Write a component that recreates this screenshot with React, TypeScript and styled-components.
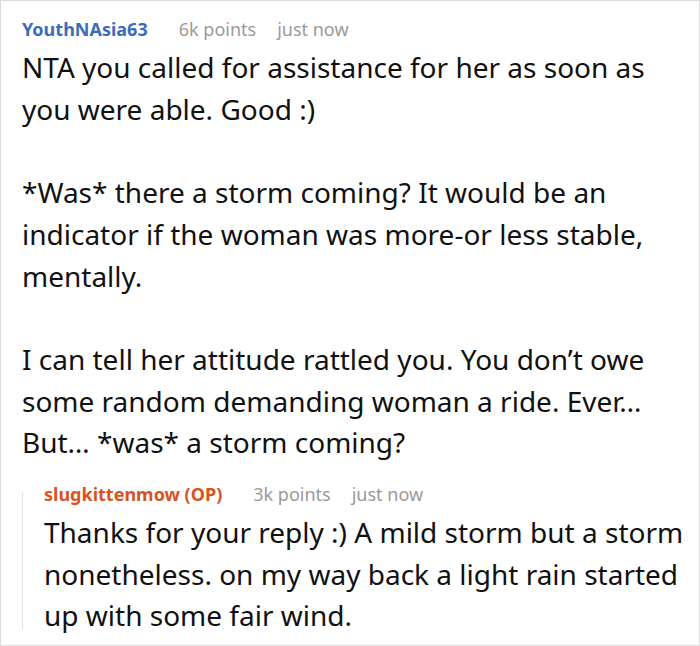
import styled, { createGlobalStyle } from 'styled-components';

const GlobalStyle = createGlobalStyle`
  html, body {
    margin: 0;
    padding: 0;
    background: #fff;
  }
  body {
    font-family: 'Noto Sans', 'Open Sans', sans-serif;
    color: #111;
  }
`;

interface Comment {
  author: string;
  isOp?: boolean;
  points: string;
  time: string;
  paragraphs: string[];
}

const mainComment: Comment = {
  author: 'YouthNAsia63',
  points: '6k points',
  time: 'just now',
  paragraphs: [
    'NTA you called for assistance for her as soon as you were able. Good :)',
    '*Was* there a storm coming? It would be an indicator if the woman was more-or less stable, mentally.',
    'I can tell her attitude rattled you. You don\u2019t owe some random demanding woman a ride. Ever\u2026 But\u2026 *was* a storm coming?',
  ],
};

const reply: Comment = {
  author: 'slugkittenmow (OP)',
  isOp: true,
  points: '3k points',
  time: 'just now',
  paragraphs: [
    'Thanks for your reply :) A mild storm but a storm nonetheless. on my way back a light rain started up with some fair wind.',
  ],
};

const CommentHeader = ({ comment }: { comment: Comment }) => (
  <Header>
    <Author isOp={comment.isOp}>{comment.author}</Author>
    <Meta>{comment.points}</Meta>
    <Meta>{comment.time}</Meta>
  </Header>
);

export default function App() {
  return (
    <>
      <GlobalStyle />
      <Thread>
        <CommentHeader comment={mainComment} />
        <Body>
          {mainComment.paragraphs.map(text => (
            <Paragraph key={text}>{text}</Paragraph>
          ))}
        </Body>
        <Reply>
          <CommentHeader comment={reply} />
          <Body>
            {reply.paragraphs.map(text => (
              <Paragraph key={text}>{text}</Paragraph>
            ))}
          </Body>
        </Reply>
      </Thread>
    </>
  );
}

const Thread = styled.div`
  box-sizing: border-box;
  width: 700px;
  height: 646px;
  border: 1px solid #dcdcdc;
  padding: 14px 6px 0 21px;
  overflow: hidden;
`;

const Header = styled.div`
  display: flex;
  align-items: baseline;
  gap: 21px;
  font-size: 18px;
  line-height: 29px;
  margin-bottom: 3px;
`;

const Author = styled.span<{ isOp?: boolean }>`
  font-weight: 700;
  color: ${props => (props.isOp ? '#d9531e' : '#3b6cba')};
  margin-right: 10px;
`;

const Meta = styled.span`
  color: #9a9a9a;
`;

const Body = styled.div`
  font-size: 28px;
  line-height: 41.7px;
`;

const Paragraph = styled.p`
  margin: 0 0 41.7px;

  &:last-child {
    margin-bottom: 0;
  }
`;

const Reply = styled.div`
  position: relative;
  margin-top: 16px;
  padding-left: 22px;

  &::before {
    content: '';
    position: absolute;
    left: 0;
    top: 12px;
    bottom: 8px;
    width: 1px;
    background: #e0e0e0;
  }
`;
